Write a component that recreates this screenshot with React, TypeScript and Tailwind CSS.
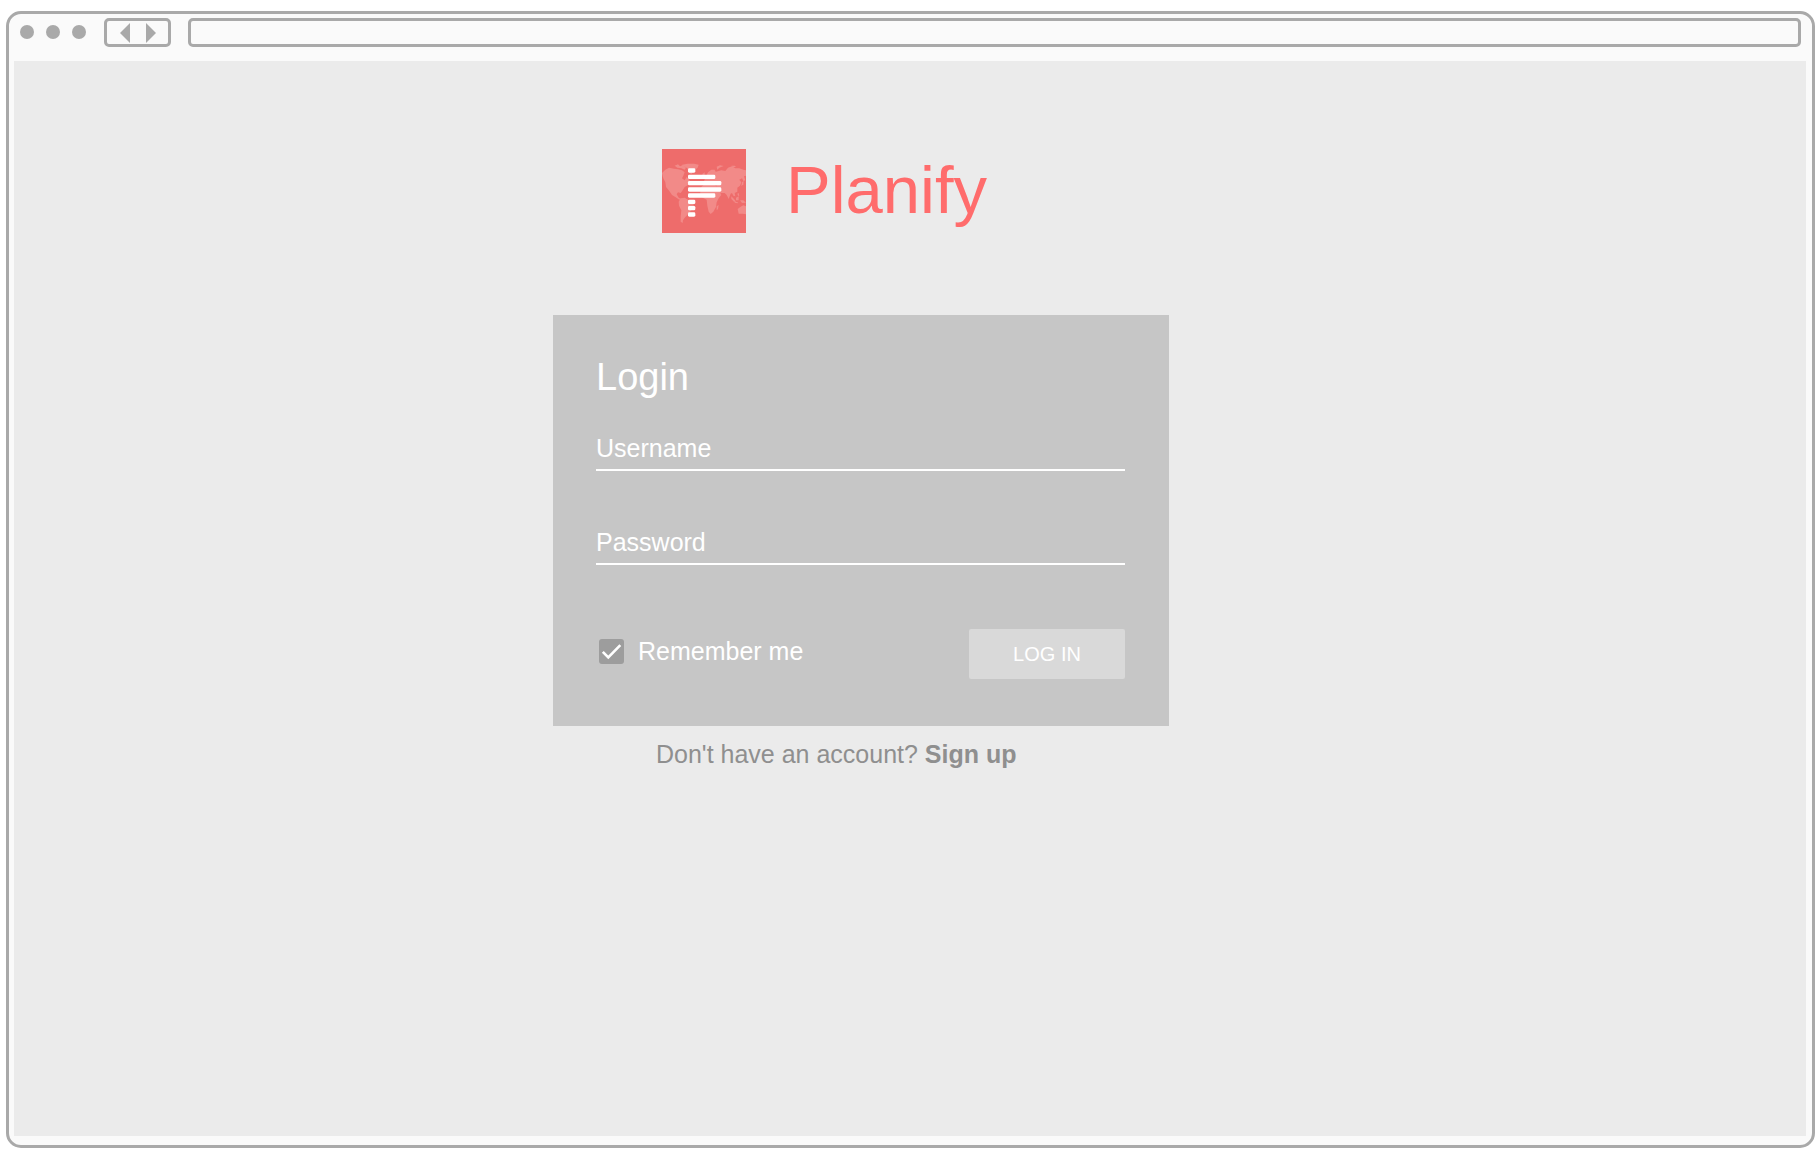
import { useState } from "react";

const bars = [
  { y: 100, w: 22 },
  { y: 119, w: 82 },
  { y: 138, w: 100 },
  { y: 157, w: 100 },
  { y: 175, w: 82 },
  { y: 194, w: 22 },
  { y: 213, w: 22 },
  { y: 232, w: 22 },
];

function Logo() {
  return (
    <svg viewBox="36 42 252 252" className="size-[84px] shrink-0" aria-hidden="true">
      <rect x="36" y="42" width="252" height="252" fill="#ee6c6b" />
      <g fill="#f28a88">
        {/* North and Central America */}
        <path d="M36 114 L46 104 L57 98 L72 101 L84 103 L96 106 L104 112 L100 122 L96 130 L104 136 L110 126 L118 134 L122 142 L114 150 L104 156 L98 166 L92 174 L84 172 L80 178 L86 188 L94 192 L88 194 L76 186 L66 180 L58 168 L48 156 L46 142 L40 130 L38 124 Z" />
        {/* Arctic islands and Greenland */}
        <path d="M74 92 L84 88 L90 94 L100 90 L108 98 L104 104 L94 100 L82 98 Z" />
        <path d="M94 90 L112 86 L132 86 L146 89 L143 98 L134 106 L124 118 L116 112 L112 100 L102 94 Z" />
        {/* South America */}
        <path d="M92 190 L104 188 L114 194 L124 202 L132 210 L128 222 L120 230 L112 240 L104 248 L99 256 L98 264 L92 260 L92 244 L94 226 L87 212 L86 200 Z" />
        {/* Europe */}
        <path d="M158 116 L164 112 L164 120 L156 122 Z" />
        <path d="M162 138 L168 124 L174 112 L184 104 L194 104 L198 112 L206 114 L206 136 L196 142 L186 138 L176 140 L166 144 Z" />
        {/* Africa */}
        <path d="M154 156 L164 146 L180 146 L196 150 L204 158 L214 180 L206 190 L200 202 L198 216 L190 230 L182 237 L176 230 L172 212 L170 194 L158 188 L150 176 Z" />
        <path d="M200 214 L206 210 L204 222 L200 226 Z" />
        {/* Asia */}
        <path d="M198 110 L214 106 L226 108 L234 98 L246 94 L256 100 L268 100 L280 104 L288 106 L288 122 L282 124 L286 136 L280 138 L276 130 L268 134 L274 142 L270 152 L262 158 L262 170 L254 174 L256 184 L250 182 L246 174 L242 176 L236 192 L230 180 L224 174 L214 174 L206 170 L200 156 L196 140 Z" />
        <path d="M200 95 L210 91 L221 93 L208 98 L202 104 Z" />
        <path d="M244 92 L254 92 L258 96 L248 96 Z" />
        <path d="M276 142 L281 138 L280 148 L274 154 Z" />
        {/* Indonesia and Australia */}
        <path d="M244 184 L252 192 L258 200 L252 200 L244 192 Z" />
        <path d="M258 188 L266 184 L266 196 L258 196 Z" />
        <path d="M262 176 L266 174 L268 182 L264 182 Z" />
        <path d="M270 196 L280 196 L288 203 L276 204 Z" />
        <path d="M254 200 L264 202 L263 205 L254 203 Z" />
        <path d="M263 222 L272 215 L280 211 L288 214 L288 238 L278 236 L266 236 Z" />
      </g>
      <g fill="#ffffff">
        {bars.map((b) => (
          <rect key={b.y} x="114" y={b.y} width={b.w} height="13" rx="4" />
        ))}
      </g>
    </svg>
  );
}

function BrowserBar() {
  return (
    <div className="flex h-[47px] shrink-0 items-start pt-1 pr-[5px] pl-[6px]">
      <div className="flex h-7 items-center gap-3 text-[#a9a9a9]">
        <span className="size-[14px] rounded-full bg-current" />
        <span className="size-[14px] rounded-full bg-current" />
        <span className="size-[14px] rounded-full bg-current" />
      </div>
      <nav className="ml-[18px] flex h-[29px] w-[67px] shrink-0 items-center justify-center gap-4 rounded-[5px] border-3 border-[#a9a9a9] text-[#a9a9a9]">
        <button type="button" aria-label="Back">
          <svg viewBox="0 0 10 20" className="h-5 w-[10px]" fill="currentColor">
            <path d="M10 0 V20 L0 10 Z" />
          </svg>
        </button>
        <button type="button" aria-label="Forward">
          <svg viewBox="0 0 10 20" className="h-5 w-[10px]" fill="currentColor">
            <path d="M0 0 V20 L10 10 Z" />
          </svg>
        </button>
      </nav>
      <input
        type="text"
        aria-label="Address"
        className="ml-[17px] h-[29px] min-w-0 flex-1 rounded-[5px] border-3 border-[#a9a9a9] bg-transparent px-2 text-sm text-gray-500 outline-none"
      />
    </div>
  );
}

const fieldClass =
  "block h-[38px] w-full border-b-2 border-white bg-transparent pb-[6px] text-[25px] leading-[30px] text-white outline-none placeholder:text-white placeholder:opacity-100";

function LoginCard() {
  const [remember, setRemember] = useState(true);
  return (
    <form
      className="bg-[#c6c6c6] pt-[38px] pr-11 pb-[47px] pl-[43px] text-[25px] leading-8 text-white"
      onSubmit={(e) => e.preventDefault()}
    >
      <h2 className="text-[38px] leading-12">Login</h2>
      <input type="text" aria-label="Username" placeholder="Username" className={`${fieldClass} mt-8`} />
      <input type="password" aria-label="Password" placeholder="Password" className={`${fieldClass} mt-14`} />
      <div className="mt-16 flex items-start justify-between">
        <label className="flex h-11 items-center pl-[3px]">
          <span className="relative mr-[14px] size-[25px]">
            <input
              type="checkbox"
              checked={remember}
              onChange={(e) => setRemember(e.target.checked)}
              className="block size-[25px] appearance-none rounded-[3px] bg-[#9d9d9d]"
            />
            {remember && (
              <svg viewBox="0 0 25 25" className="pointer-events-none absolute inset-0" fill="none" stroke="#fff" strokeWidth="2.6">
                <path d="M3.8 12.8 L9.3 18.4 L21.3 6.2" />
              </svg>
            )}
          </span>
          Remember me
        </label>
        <button type="submit" className="h-[50px] w-[156px] rounded-[2px] bg-[#d9d9d9] text-xl leading-6">
          LOG IN
        </button>
      </div>
    </form>
  );
}

export default function App() {
  return (
    <div className="flex min-h-screen flex-col bg-white pt-[11px] pr-[5px] pb-[9px] pl-[6px] font-['Liberation_Sans',Arial,sans-serif]">
      <div className="flex flex-1 flex-col rounded-[15px] border-3 border-[#a9a9a9] bg-[#fafafa] pr-[6px] pb-[9px] pl-[5px]">
        <BrowserBar />
        <main className="flex flex-1 flex-col items-center bg-[#ebebeb] pt-[88px] pr-[98px]">
          <div className="w-full max-w-[616px]">
            <header className="flex items-start gap-10 pl-[109px]">
              <Logo />
              <h1 className="text-[67px] leading-[82px] text-[#ff6c6c]">Planify</h1>
            </header>
            <div className="mt-[82px]">
              <LoginCard />
            </div>
            <p className="mt-3 pl-[103px] text-[25px] leading-8 text-[#8f8f8f]">
              Don't have an account?{" "}
              <a href="#signup" className="font-bold">
                Sign up
              </a>
            </p>
          </div>
        </main>
      </div>
    </div>
  );
}
